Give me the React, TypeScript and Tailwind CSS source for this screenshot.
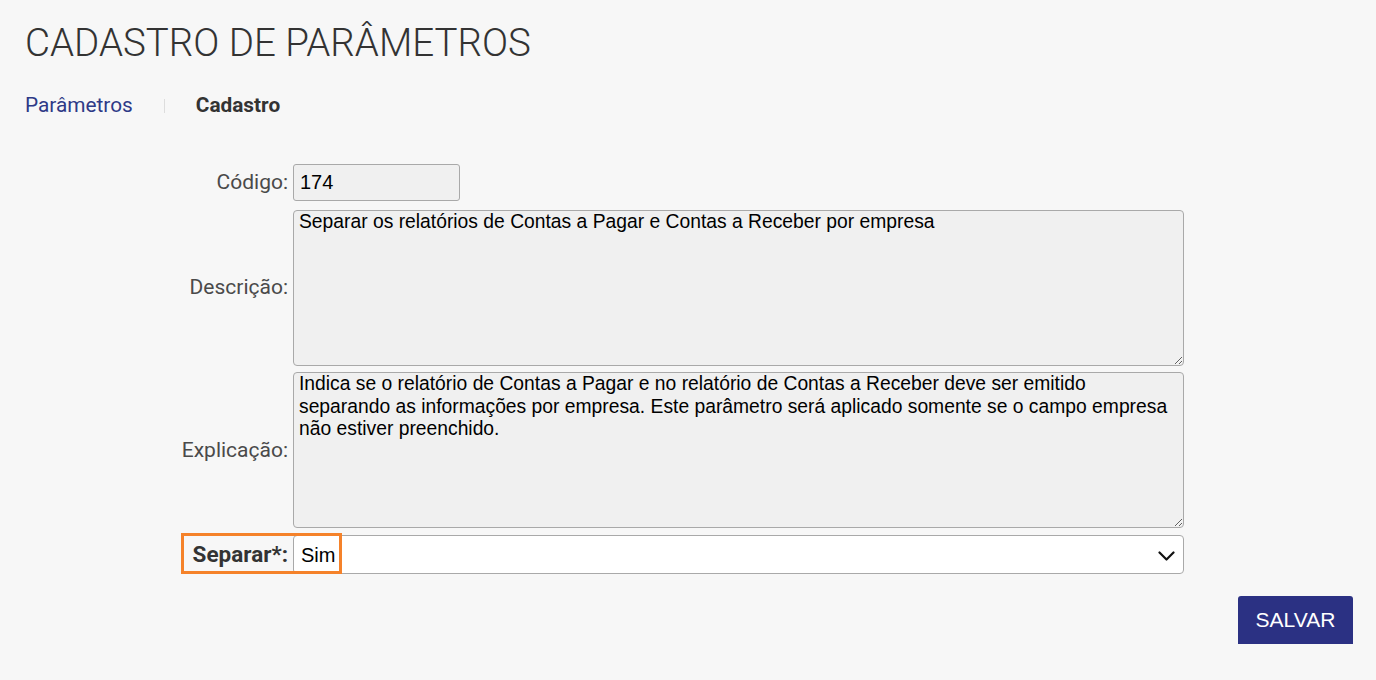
const labelCls =
  "text-right text-[21px] text-[#4a4a4a] self-center pr-[5px] font-['Roboto',sans-serif]";

const App = () => {
  return (
    <div className="min-h-screen bg-[#f7f7f7] px-[25px] pt-[19px] font-['Roboto',sans-serif]">
      <h1 className="text-[38.5px] font-light leading-[48px] text-[#333]">
        CADASTRO DE PARÂMETROS
      </h1>

      <div className="mt-[23px] flex items-center text-[20.8px]">
        <span className="text-[#2e3a87]">Parâmetros</span>
        <span className="mx-[31px] h-[14px] w-[1px] bg-[#ddd]" />
        <span className="font-bold text-[#333]">Cadastro</span>
      </div>

      <div className="mt-[43px] grid grid-cols-[268px_891px] gap-y-[8px] font-['Liberation_Sans',Arial,sans-serif]">
        <label className={labelCls}>Código:</label>
        <input
          readOnly
          value="174"
          className="h-[37px] w-[167px] rounded-[3px] border border-[#a9a9a9] bg-[#f0f0f0] px-[6px] text-[20px] text-black outline-none"
        />

        <label className={labelCls}>Descrição:</label>
        <textarea
          readOnly
          value="Separar os relatórios de Contas a Pagar e Contas a Receber por empresa"
          className="mt-[1px] h-[156px] w-full resize-y rounded-[4px] border border-[#a9a9a9] bg-[#f0f0f0] pl-[5px] pr-[13px] py-0 text-[19.3px] leading-[22.5px] text-black outline-none"
        />

        <label className={labelCls}>Explicação:</label>
        <textarea
          readOnly
          value="Indica se o relatório de Contas a Pagar e no relatório de Contas a Receber deve ser emitido separando as informações por empresa. Este parâmetro será aplicado somente se o campo empresa não estiver preenchido."
          className="-mt-[2px] h-[156px] w-full resize-y rounded-[4px] border border-[#a9a9a9] bg-[#f0f0f0] pl-[5px] pr-[13px] py-0 text-[19.3px] leading-[22.5px] text-black outline-none"
        />

        <div className="relative col-span-2 -mt-[1px] grid grid-cols-[268px_891px]">
          <label className={labelCls + " !text-[22.5px] font-bold !text-[#333]"}>Separar*:</label>
          <div className="relative flex h-[39px] items-center rounded-[4px] border border-[#a9a9a9] bg-white pl-[7px] text-[20px] text-black">
            <span>Sim</span>
            <svg
              className="absolute right-[8px] top-[15px]"
              width="17"
              height="10"
              viewBox="0 0 17 10"
              fill="none"
              stroke="#111"
              strokeWidth="2.2"
              strokeLinecap="round"
              strokeLinejoin="round"
            >
              <polyline points="1.5,1.5 8.5,8.5 15.5,1.5" />
            </svg>
          </div>
          <div className="pointer-events-none absolute left-[156px] top-[-2px] h-[41px] w-[161px] border-[3px] border-[#f5822a]" />
        </div>
      </div>

      <div className="mt-[22px] flex justify-end">
        <button className="mr-[-2px] h-[48px] w-[115px] rounded-t-[3px] bg-[#2b3183] font-['Liberation_Sans',Arial,sans-serif] text-[21px] text-white">
          SALVAR
        </button>
      </div>
    </div>
  );
};

export default App;
